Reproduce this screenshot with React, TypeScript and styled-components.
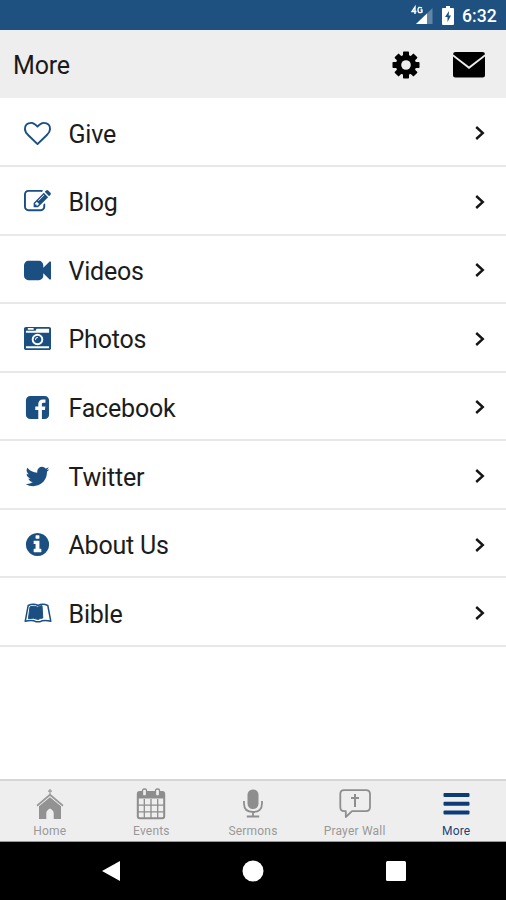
import React from 'react';
import styled, { createGlobalStyle } from 'styled-components';

const GlobalStyle = createGlobalStyle`
  * { box-sizing: border-box; }
  body { margin: 0; background: #fff; font-family: Roboto, "Liberation Sans", sans-serif; }
`;

const Screen = styled.div`
  width: 506px;
  height: 900px;
  display: flex;
  flex-direction: column;
  background: #fff;
  overflow: hidden;
`;

const StatusBar = styled.div`
  height: 30px;
  flex: none;
  display: flex;
  align-items: center;
  justify-content: flex-end;
  padding-right: 9px;
  background: #1e517f;
  color: #fff;
`;

const BatterySlot = styled.span`
  display: flex;
  margin-left: 8px;
`;

const Clock = styled.span`
  width: 35px;
  margin-left: 8px;
  padding-top: 1px;
  font-size: 17.6px;
  font-weight: 500;
  line-height: 30px;
  white-space: nowrap;
`;

const Header = styled.header`
  height: 68px;
  flex: none;
  display: flex;
  align-items: center;
  padding: 1px 21.5px 0 13px;
  background: #eee;
`;

const Title = styled.h1`
  flex: 1;
  margin: 0;
  padding-top: 2px;
  font-size: 25px;
  font-weight: 400;
  letter-spacing: -0.2px;
  color: #1a1a1a;
`;

const HeaderActions = styled.div`
  display: flex;
  align-items: center;
  gap: 33px;
`;

const List = styled.nav`
  flex: 1;
  display: flex;
  flex-direction: column;
  padding-top: 0.5px;
`;

const Row = styled.a`
  height: 68.55px;
  flex: none;
  display: flex;
  align-items: center;
  padding: 3px 20px 0 0;
  border-bottom: 2px solid #e8e8e8;
`;

const RowIcon = styled.span`
  width: 75px;
  height: 27px;
  display: flex;
  justify-content: center;
  align-items: center;
  color: #1b4f82;
`;

const RowLabel = styled.span`
  flex: 1;
  margin-left: -6.5px;
  padding-top: 2px;
  font-size: 25px;
  font-weight: 400;
  letter-spacing: -0.2px;
  color: #1c1c1c;
`;

const TabBar = styled.nav`
  height: 63px;
  flex: none;
  display: grid;
  grid-template-columns: repeat(5, 101.6px);
  justify-content: center;
  background: #eee;
  border-top: 2px solid #d6d6d6;
  border-bottom: 1px solid #999;
`;

const Tab = styled.a<{ $active?: boolean }>`
  display: flex;
  flex-direction: column;
  align-items: center;
  padding-top: 7px;
  font-size: 12px;
  line-height: 14px;
  letter-spacing: 0.2px;
  color: ${(p) => (p.$active ? '#17457c' : '#999')};
  svg { margin-bottom: 4px; }
`;

const SystemNav = styled.div`
  height: 58px;
  flex: none;
  display: grid;
  grid-template-columns: repeat(3, 142.5px);
  justify-content: center;
  align-items: center;
  justify-items: center;
  background: #000;
`;

const FA = {
  heart:
    'M1664 596q0-81-21.5-143t-55-98.5-81.5-59.5-94-31-98-8-112 25.5-110.5 64-86.5 72-60 61.5q-18 22-49 22t-49-22q-24-28-60-61.5t-86.5-72-110.5-64-112-25.5-98 8-94 31-81.5 59.5-55 98.5-21.5 143q0 168 187 355l581 560 580-559q188-188 188-356zm128 0q0 221-229 450l-623 600q-18 18-44 18t-44-18l-624-602q-10-8-27.5-26t-55.5-65.5-68-97.5-53.5-121-23.5-138q0-220 127-344t351-124q62 0 126.5 21.5t120 58 95.5 68.5 76 68q36-36 76-68t95.5-68.5 120-58 126.5-21.5q224 0 351 124t127 344z',
  edit:
    'M888 1184l116-116-152-152-116 116v56h96v96h56zm440-720q-16-16-33 1l-350 350q-17 17-1 33t33-1l350-350q17-17 1-33zm80 594v190q0 119-84.5 203.5t-203.5 84.5h-832q-119 0-203.5-84.5t-84.5-203.5v-832q0-119 84.5-203.5t203.5-84.5h832q63 0 117 25 15 7 18 23 3 17-9 29l-49 49q-14 14-32 8-23-6-45-6h-832q-66 0-113 47t-47 113v832q0 66 47 113t113 47h832q66 0 113-47t47-113v-126q0-13 9-22l64-64q15-15 35-7t20 29zm-96-738l288 288-672 672h-288v-288zm444 132l-92 92-288-288 92-92q28-28 68-28t68 28l152 152q28 28 28 68t-28 68z',
  video:
    'M1792 352v1088q0 42-39 59-13 5-25 5-27 0-45-19l-403-403v166q0 119-84.5 203.5t-203.5 84.5h-704q-119 0-203.5-84.5t-84.5-203.5v-704q0-119 84.5-203.5t203.5-84.5h704q119 0 203.5 84.5t84.5 203.5v165l403-402q18-19 45-19 12 0 25 5 39 17 39 59z',
  camera:
    'M928 832q0-14-9-23t-23-9q-66 0-113 47t-47 113q0 14 9 23t23 9 23-9 9-23q0-40 28-68t68-28q14 0 23-9t9-23zm224 130q0 106-75 181t-181 75-181-75-75-181 75-181 181-75 181 75 75 181zm-1024 574h1536v-128h-1536v128zm1152-574q0-159-112.5-271.5t-271.5-112.5-271.5 112.5-112.5 271.5 112.5 271.5 271.5 112.5 271.5-112.5 112.5-271.5zm-1024-642h384v-128h-384v128zm-128 192h1536v-256h-828l-64 128h-644v128zm1664-256v1280q0 53-37.5 90.5t-90.5 37.5h-1536q-53 0-90.5-37.5t-37.5-90.5v-1280q0-53 37.5-90.5t90.5-37.5h1536q53 0 90.5 37.5t37.5 90.5z',
  facebook:
    'M1376 128q119 0 203.5 84.5t84.5 203.5v960q0 119-84.5 203.5t-203.5 84.5h-188v-595h199l30-232h-229v-148q0-56 23.5-84t91.5-28l122-1v-207q-63-9-178-9-136 0-217.5 80t-81.5 226v171h-200v232h200v595h-532q-119 0-203.5-84.5t-84.5-203.5v-960q0-119 84.5-203.5t203.5-84.5h960z',
  twitter:
    'M1684 408q-67 98-162 167 1 14 1 42 0 130-38 259.5t-115.5 248.5-184.5 210.5-258 146-323 54.5q-271 0-496-145 35 4 78 4 225 0 401-138-105-2-188-64.5t-114-159.5q33 5 61 5 43 0 85-11-112-23-185.5-111.5t-73.5-205.5v-4q68 38 146 41-66-44-105-115t-39-154q0-88 44-163 121 149 294.5 238.5t371.5 99.5q-8-38-8-74 0-134 94.5-228.5t228.5-94.5q140 0 236 102 109-21 205-78-37 115-142 178 93-10 186-50z',
  info:
    'M1152 1376v-160q0-14-9-23t-23-9h-96v-512q0-14-9-23t-23-9h-320q-14 0-23 9t-9 23v160q0 14 9 23t23 9h96v320h-96q-14 0-23 9t-9 23v160q0 14 9 23t23 9h448q14 0 23-9t9-23zm-128-896v-160q0-14-9-23t-23-9h-192q-14 0-23 9t-9 23v160q0 14 9 23t23 9h192q14 0 23-9t9-23zm640 416q0 209-103 385.5t-279.5 279.5-385.5 103-385.5-103-279.5-279.5-103-385.5 103-385.5 279.5-279.5 385.5-103 385.5 103 279.5 279.5 103 385.5z',
};

const Glyph = ({ d }: { d: string }) => (
  <svg width="27" height="27" viewBox="0 0 1792 1792" fill="currentColor">
    <path d={d} />
  </svg>
);

const OpenBook = () => (
  <svg width="28" height="27" viewBox="0 0 28 27" fill="none" stroke="currentColor" strokeWidth="1.5" strokeLinejoin="round">
    <path d="M4.2 5.5Q9.5 3.2 14 5.5Q18.5 3.2 23.8 5.5L26.8 21.3Q20 19.3 15.6 21.8H12.4Q8 19.3 1.2 21.3Z" />
    <path d="M6 6.8Q10 5.3 13.8 7.2Q15.8 5.8 18 5.6L18.8 18Q16 18.2 14 19.5Q9.5 17.3 4.4 18.7Z" fill="currentColor" strokeWidth="1" />
  </svg>
);

const Signal = () => (
  <svg width="23" height="20" viewBox="0 0 23 20">
    <path d="M21.5 3V19H5Z" fill="#fff" opacity=".3" />
    <path d="M16 8.5V19H5Z" fill="#fff" />
    <g fill="none" stroke="#fff" strokeWidth="1.4">
      <path d="M4 9V2L1 6.5H5.5" />
      <path d="M11 3Q7 1 7 5T11 7V5H9.5" />
    </g>
  </svg>
);

const Battery = () => (
  <svg width="12" height="19" viewBox="0 0 12 19">
    <path d="M4 0H8V2H11Q12 2 12 3V18Q12 19 11 19H1Q0 19 0 18V3Q0 2 1 2H4Z" fill="#fff" />
    <path d="M7 5L3 11H5.5V16L9 9.5H6.7Z" fill="#1e517f" />
  </svg>
);

const Gear = () => (
  <svg width="28" height="28" viewBox="-14 -14 28 28">
    {[0, 45, 90, 135].map((a) => (
      <rect key={a} x="-3" y="-13.5" width="6" height="27" rx=".8" transform={`rotate(${a})`} />
    ))}
    <circle r="10.2" />
    <circle r="4.8" fill="#eee" />
  </svg>
);

const Envelope = () => (
  <svg width="32" height="26" viewBox="0 0 32 26">
    <path d="M2.5 0H29.5Q31.8 0 32 2.2L16 14.5L0 2.2Q.2 0 2.5 0Z" />
    <path d="M0 4.6L16 17L32 4.6V23Q32 25.5 29.5 25.5H2.5Q0 25.5 0 23Z" />
  </svg>
);

const Chevron = () => (
  <svg width="12" height="16" viewBox="0 0 12 16" fill="none" stroke="#151515" strokeWidth="2.4">
    <path d="M2.2 2L8.8 8L2.2 14" />
  </svg>
);

const Church = () => (
  <svg width="28" height="32" viewBox="0 0 28 32" fill="#999">
    <path d="M13.4 1H14.6V2.5H16V3.7H14.6V6L27.5 17L26.5 18.4L14 8L1.5 18.4L.5 17L13.4 6V3.7H12V2.5H13.4Z" />
    <path d="M14 9.2L25 18.2V31H17.7V25Q17.7 22.5 14 20.5Q10.3 22.5 10.3 25V31H3V18.2Z" fill="#929292" />
  </svg>
);

const CalendarIcon = () => (
  <svg width="30" height="32" viewBox="0 0 30 32" fill="none" stroke="#8d8d8d">
    <path d="M2 10V5.5Q2 4 3.5 4H26.5Q28 4 28 5.5V10Z" fill="#8d8d8d" />
    <rect x="1.8" y="4" width="26.4" height="26.3" rx="2" strokeWidth="2" />
    <path d="M8.3 11V30M15 11V30M21.7 11V30M2 17.2H28M2 23.8H28" strokeWidth="1.3" />
    <rect x="6.5" y="1" width="4" height="7" rx="1.6" fill="#eee" strokeWidth="1.3" />
    <rect x="19.5" y="1" width="4" height="7" rx="1.6" fill="#eee" strokeWidth="1.3" />
  </svg>
);

const Mic = () => (
  <svg width="22" height="32" viewBox="0 0 22 32" fill="none" stroke="#8e8e8e" strokeWidth="1.8">
    <rect x="5.5" y="1.5" width="11" height="19.5" rx="5.2" fill="#8e8e8e" stroke="none" />
    <path d="M2 13V15.5Q2 24 11 24T20 15.5V13M11 24V28.5M4.8 28.5H17.2" />
  </svg>
);

const PrayerBubble = () => (
  <svg width="32" height="32" viewBox="0 0 32 32" fill="none" stroke="#8e8e8e" strokeWidth="1.8">
    <path d="M5 2.2H27Q31 2.2 31 6V19Q31 23.2 27 23.2H13L6.8 29V23.2H5Q1.3 23.2 1.3 19V6Q1.3 2.2 5 2.2Z" strokeLinejoin="round" />
    <path d="M16 6V19M12 10H20" strokeWidth="2" />
  </svg>
);

const Bars = () => (
  <svg width="28" height="32" viewBox="0 0 28 32" fill="#0d3b76">
    <rect x="1.5" y="5" width="26" height="4" rx="1" />
    <rect x="1.5" y="13.7" width="26" height="4" rx="1" />
    <rect x="1.5" y="22.4" width="26" height="4" rx="1" />
  </svg>
);

const rows = [
  { label: 'Give', icon: <Glyph d={FA.heart} /> },
  { label: 'Blog', icon: <Glyph d={FA.edit} /> },
  { label: 'Videos', icon: <Glyph d={FA.video} /> },
  { label: 'Photos', icon: <Glyph d={FA.camera} /> },
  { label: 'Facebook', icon: <Glyph d={FA.facebook} /> },
  { label: 'Twitter', icon: <Glyph d={FA.twitter} /> },
  { label: 'About Us', icon: <Glyph d={FA.info} /> },
  { label: 'Bible', icon: <OpenBook /> },
];

const tabs = [
  { label: 'Home', icon: <Church /> },
  { label: 'Events', icon: <CalendarIcon /> },
  { label: 'Sermons', icon: <Mic /> },
  { label: 'Prayer Wall', icon: <PrayerBubble /> },
  { label: 'More', icon: <Bars />, active: true },
];

export default function App() {
  return (
    <Screen>
      <GlobalStyle />
      <StatusBar>
        <Signal />
        <BatterySlot>
          <Battery />
        </BatterySlot>
        <Clock>6:32</Clock>
      </StatusBar>
      <Header>
        <Title>More</Title>
        <HeaderActions>
          <Gear />
          <Envelope />
        </HeaderActions>
      </Header>
      <List>
        {rows.map((r) => (
          <Row key={r.label}>
            <RowIcon>{r.icon}</RowIcon>
            <RowLabel>{r.label}</RowLabel>
            <Chevron />
          </Row>
        ))}
      </List>
      <TabBar>
        {tabs.map((t) => (
          <Tab key={t.label} $active={t.active}>
            {t.icon}
            {t.label}
          </Tab>
        ))}
      </TabBar>
      <SystemNav>
        <svg width="20" height="22" viewBox="0 0 20 22" fill="#fff"><path d="M1 11L19 1V21Z" /></svg>
        <svg width="22" height="22" viewBox="0 0 22 22" fill="#fff"><circle cx="11" cy="11" r="10.5" /></svg>
        <svg width="20" height="20" viewBox="0 0 20 20" fill="#fff"><rect width="20" height="20" rx="1.5" /></svg>
      </SystemNav>
    </Screen>
  );
}
